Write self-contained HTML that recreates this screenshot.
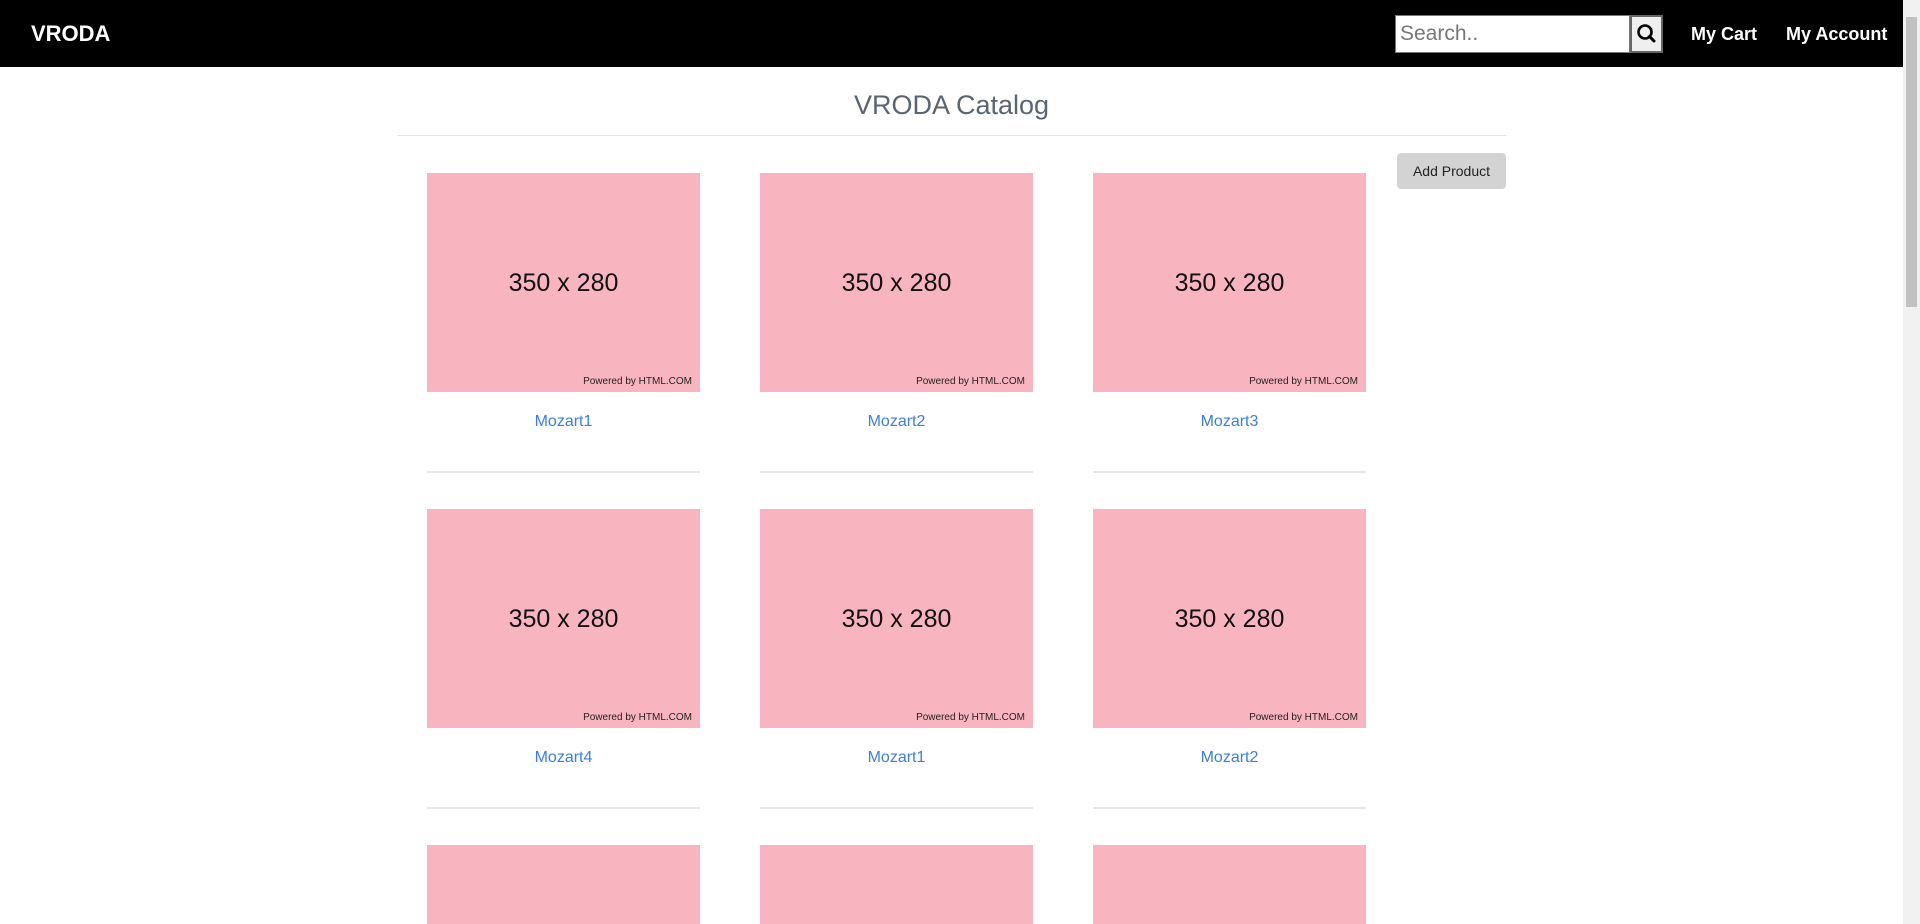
<!DOCTYPE html>
<html style="overflow:hidden;height:924px"><head><style>
*{margin:0;padding:0;box-sizing:border-box}
html,body{width:1920px;height:924px;overflow:hidden}
body{font-family:"Liberation Sans",Arial,sans-serif;background:#fff;position:relative}
.nav{position:absolute;left:0;top:0;width:1903px;height:67px;background:#000;color:#fff}
.brand{position:absolute;left:31px;top:21px;font-size:22px;font-weight:bold}
.search{position:absolute;left:1395px;top:15px;width:235px;height:38px;background:#fff;border:1px solid #777;font-size:21px;color:#777;padding:6px 4px}
.sbtn{position:absolute;left:1630px;top:15px;width:33px;height:38px;background:#efefef;border:2px solid #666}
.nl{position:absolute;top:24px;font-size:18px;font-weight:bold}
.sb{position:absolute;right:0;top:0;width:17px;height:924px;background:#f1f1f1}
.sb div{position:absolute;left:3px;top:17px;width:11px;height:290px;background:#c1c1c1}
h1{position:absolute;left:0;width:1903px;top:90px;text-align:center;font-weight:normal;font-size:27px;color:#5a6570}
.hr{position:absolute;left:397px;top:135px;width:1109px;height:1px;background:#e3e3e3}
.add{position:absolute;left:1397px;top:153px;width:109px;height:36px;background:#d3d3d3;border-radius:4px;font-size:14px;color:#222;text-align:center;line-height:36px}
.card{position:absolute;width:273px}
.img{height:219px;background:#f9b5bf;position:relative}
.img .t{position:absolute;left:0;right:0;top:96px;text-align:center;font-size:25px;color:#111}
.img .p{position:absolute;right:8px;bottom:5px;font-size:10px;color:#222}
.lbl{text-align:center;color:#3b7ded;font-size:16px;margin-top:21px}
.ln{position:absolute;top:298px;left:0;width:273px;height:2px;background:#e6e6e6}
</style></head><body>
<div class="nav"><div class="brand">VRODA</div>
<div class="search">Search..</div>
<div class="sbtn"><svg width="29" height="34" viewBox="0 0 29 34"><circle cx="13" cy="15" r="6.5" fill="none" stroke="#000" stroke-width="2.6"/><line x1="17.5" y1="19.5" x2="22" y2="24" stroke="#000" stroke-width="3" stroke-linecap="round"/></svg></div>
<div class="nl" style="left:1691px">My Cart</div>
<div class="nl" style="left:1786px">My Account</div></div>
<div class="sb"><div></div></div>
<h1>VRODA Catalog</h1>
<div class="hr"></div>
<div class="add">Add Product</div>

<div class="card" style="left:427px;top:173px"><div class="img"><div class="t">350 x 280</div><div class="p">Powered by HTML.COM</div></div><div class="lbl">Mozart1</div><div class="ln"></div></div>
<div class="card" style="left:760px;top:173px"><div class="img"><div class="t">350 x 280</div><div class="p">Powered by HTML.COM</div></div><div class="lbl">Mozart2</div><div class="ln"></div></div>
<div class="card" style="left:1093px;top:173px"><div class="img"><div class="t">350 x 280</div><div class="p">Powered by HTML.COM</div></div><div class="lbl">Mozart3</div><div class="ln"></div></div>

<div class="card" style="left:427px;top:509px"><div class="img"><div class="t">350 x 280</div><div class="p">Powered by HTML.COM</div></div><div class="lbl">Mozart4</div><div class="ln"></div></div>
<div class="card" style="left:760px;top:509px"><div class="img"><div class="t">350 x 280</div><div class="p">Powered by HTML.COM</div></div><div class="lbl">Mozart1</div><div class="ln"></div></div>
<div class="card" style="left:1093px;top:509px"><div class="img"><div class="t">350 x 280</div><div class="p">Powered by HTML.COM</div></div><div class="lbl">Mozart2</div><div class="ln"></div></div>

<div class="card" style="left:427px;top:845px;height:79px;overflow:hidden"><div class="img"></div></div>
<div class="card" style="left:760px;top:845px;height:79px;overflow:hidden"><div class="img"></div></div>
<div class="card" style="left:1093px;top:845px;height:79px;overflow:hidden"><div class="img"></div></div>
</body></html>
